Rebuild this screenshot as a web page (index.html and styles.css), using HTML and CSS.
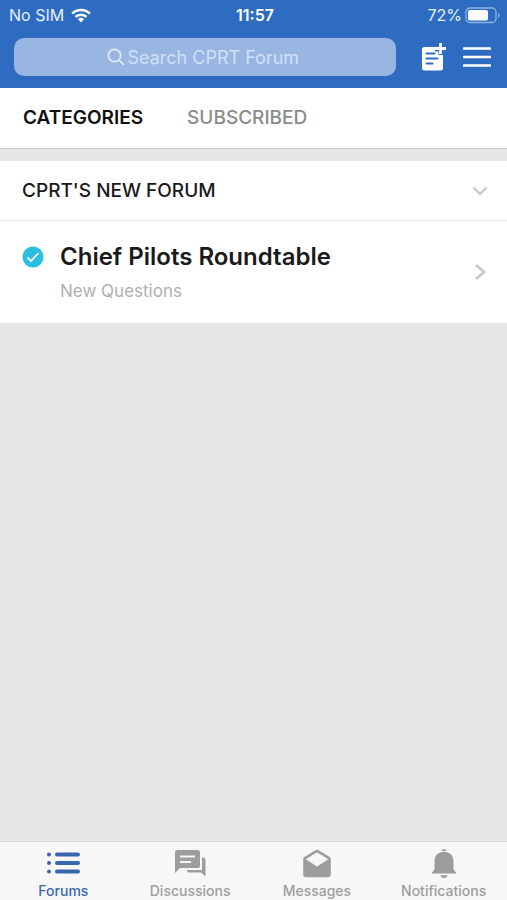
FILE: index.html
```html
<!DOCTYPE html>
<html lang="en">
<head>
<meta charset="utf-8">
<meta name="viewport" content="width=device-width, initial-scale=1">
<title>CPRT Forum</title>
<link rel="stylesheet" href="styles.css">
</head>
<body>
<header class="top">
  <div class="status">
    <div class="status-left">
      <span>No SIM</span>
      <svg width="20" height="15" viewBox="0 0 20 15" aria-hidden="true">
        <path d="M1.2 5.600a12.500 12.500 0 0 1 17.600 0" fill="none" stroke="#fff" stroke-width="2.700"/>
        <path d="M4.500 9a7.800 7.800 0 0 1 11 0" fill="none" stroke="#fff" stroke-width="2.500"/>
        <path d="M10 14.400 7 11.300a4.300 4.300 0 0 1 6 0z" fill="#fff"/>
      </svg>
    </div>
    <span class="clock">11:57</span>
    <div class="status-right">
      <span>72%</span>
      <svg width="36" height="17" viewBox="0 0 36 17" aria-hidden="true">
        <rect x="1" y="1" width="30" height="14.500" rx="4" fill="none" stroke="#8fb2e2" stroke-width="1.300"/>
        <rect x="3" y="3" width="20" height="10.500" rx="2" fill="#fff"/>
        <path d="M33 5.800v5c2-.8 2-4.200 0-5z" fill="#8fb2e2"/>
      </svg>
    </div>
  </div>
  <div class="toolbar">
    <label class="search">
      <svg width="18" height="18" viewBox="0 0 18 18" fill="none" stroke="#e2ecf9" stroke-width="1.700" aria-hidden="true">
        <circle cx="7.500" cy="7.500" r="6.200"/><path d="m12 12 5 5"/>
      </svg>
      <input type="search" placeholder="Search CPRT Forum" aria-label="Search CPRT Forum">
    </label>
    <button class="icon-button" type="button" aria-label="New topic">
      <svg width="26" height="30" viewBox="0 0 26 30" aria-hidden="true">
        <path d="M3.500 5H14v4.500h3.500V13H22v13a2.500 2.500 0 0 1-2.500 2.500h-16A2.500 2.500 0 0 1 1 26V7.500A2.500 2.500 0 0 1 3.500 5z" fill="#fff"/>
        <path d="M5.500 11.500h8M5.500 16.500h11M5.500 21.500h6" stroke="#2d6cc0" stroke-width="2" stroke-linecap="round"/>
        <path d="M19.500 1v11M14 6.500h11" stroke="#fff" stroke-width="2.800"/>
      </svg>
    </button>
    <button class="icon-button" type="button" aria-label="Menu">
      <svg width="28" height="22" viewBox="0 0 28 22" aria-hidden="true">
        <path d="M1 2.500h26M1 11h26M1 19.500h26" stroke="#fff" stroke-width="2.600" stroke-linecap="round"/>
      </svg>
    </button>
  </div>
</header>

<nav class="tabs" aria-label="Forum views">
  <a class="active" href="#categories">CATEGORIES</a>
  <a href="#subscribed">SUBSCRIBED</a>
</nav>

<main class="content" id="categories">
  <button class="section-head" type="button" aria-expanded="true">
    <span>CPRT'S NEW FORUM</span>
    <svg width="16" height="10" viewBox="0 0 16 10" fill="none" stroke="#c8c8c8" stroke-width="2.400" aria-hidden="true"><path d="m1.500 1.500 6.500 6.500 6.500-6.500"/></svg>
  </button>
  <a class="forum" href="#forum">
    <svg class="check" width="22" height="22" viewBox="0 0 22 22" aria-hidden="true">
      <circle cx="11" cy="11" r="10.500" fill="#27bee0"/>
      <path d="m5.500 11.500 3.500 3.500 7.500-8" fill="none" stroke="#fff" stroke-width="1.800"/>
    </svg>
    <span class="forum-text">
      <span class="forum-title">Chief Pilots Roundtable</span>
      <span class="forum-note">New Questions</span>
    </span>
    <svg class="chevron" width="16" height="16" viewBox="0 0 16 16" fill="none" stroke="#c8c8c8" stroke-width="2.600" aria-hidden="true"><path d="m4 1 8 7-8 7"/></svg>
  </a>
</main>

<nav class="bottom" aria-label="Main">
  <a class="active" href="#forums">
    <svg width="34" height="32" viewBox="0 0 34 32" aria-hidden="true">
      <g fill="none" stroke="#3867b0" stroke-width="4" stroke-linecap="round"><path d="M11 7.500h21M11 16h21M11 24.500h21"/></g>
      <g fill="#3867b0"><circle cx="3" cy="7.500" r="2"/><circle cx="3" cy="16" r="2"/><circle cx="3" cy="24.500" r="2"/></g>
    </svg>
    <span>Forums</span>
  </a>
  <a href="#discussions">
    <svg width="34" height="32" viewBox="0 0 34 32" aria-hidden="true">
      <path d="M4.500 3h20A2.500 2.500 0 0 1 27 5.500v13a2.500 2.500 0 0 1-2.500 2.500H7l-5 5V5.500A2.500 2.500 0 0 1 4.500 3z" fill="#9d9d9d"/>
      <path d="M7 9.500h15M7 15h11" stroke="#f7f7f7" stroke-width="2"/>
      <path d="M29 10.500h1a2.500 2.500 0 0 1 2.500 2.500v16.500L28 25.500H16a2 2 0 0 1-2-2V23h15z" fill="#9d9d9d"/>
    </svg>
    <span>Discussions</span>
  </a>
  <a href="#messages">
    <svg width="34" height="32" viewBox="0 0 34 32" aria-hidden="true">
      <path fill-rule="evenodd" d="M15.500 3.200a3 3 0 0 1 3 0l10.800 6.600c1 .6 1.500 1.500 1.500 2.500v15a3 3 0 0 1-3 3H6.200a3 3 0 0 1-3-3v-15c0-1 .5-1.900 1.500-2.500zM17 5.200 5.800 12.200 17 19.600l11.200-7.400z" fill="#9d9d9d"/>
    </svg>
    <span>Messages</span>
  </a>
  <a href="#notifications">
    <svg width="34" height="32" viewBox="0 0 34 32" aria-hidden="true">
      <path d="M14.500 4a2.600 2.600 0 0 1 5 0zM17 4.800c5.800 0 9.500 3.800 9.500 9.200v8l3 4.500h-25l3-4.500v-8c0-5.400 3.700-9.200 9.500-9.200zM13.500 28.200h7a3.600 3.600 0 0 1-7 0z" fill="#9d9d9d"/>
    </svg>
    <span>Notifications</span>
  </a>
</nav>
</body>
</html>
```
FILE: styles.css
```css
* { box-sizing: border-box; }

body {
  margin: 0;
  min-height: 100vh;
  display: flex;
  flex-direction: column;
  background: #e7e7e7;
  color: #1a1a1a;
  font-family: Inter, "Liberation Sans", sans-serif;
}

a { color: inherit; text-decoration: none; }
svg { display: block; flex: none; }
button { font: inherit; color: inherit; border: 0; padding: 0; cursor: pointer; }

.top { background: #2d6cc0; color: #e8f0fb; padding-bottom: 12px; }

.status {
  display: grid;
  grid-template-columns: 1fr auto 1fr;
  align-items: center;
  height: 30px;
  padding: 0 6px 0 9px;
  font-size: 16px;
}
.status-left, .status-right { display: flex; align-items: center; gap: 7px; }
.status-right { justify-content: flex-end; gap: 3px; }
.clock { color: #fff; font-weight: 600; }

.toolbar {
  display: flex;
  align-items: center;
  padding: 8px 16px 0 14px;
}
.search {
  flex: 1;
  display: flex;
  align-items: center;
  justify-content: center;
  gap: 3px;
  height: 38px;
  margin-right: 25px;
  border-radius: 10px;
  background: #98b6e1;
}
.search input {
  width: 176px;
  field-sizing: content;
  padding: 0;
  border: 0;
  outline: 0;
  background: none;
  color: #fff;
  font: 18px Inter, "Liberation Sans", sans-serif;
  appearance: none;
}
.search input::placeholder { color: #cfe0f7; opacity: 1; }
.icon-button { background: none; }
.icon-button + .icon-button { margin-left: 16px; }

.tabs {
  display: flex;
  align-items: center;
  gap: 44px;
  height: 61px;
  padding: 0 23px 2px;
  background: #fff;
  border-bottom: 1px solid #c9c9c9;
  color: #8b8b8b;
  font-size: 19px;
  font-weight: 500;
}
.tabs .active { color: #111; font-weight: 600; }

.content { flex: 1; padding-top: 12px; }

.section-head {
  display: flex;
  align-items: center;
  justify-content: space-between;
  width: 100%;
  height: 60px;
  padding: 0 19px 0 22px;
  background: #fff;
  border-bottom: 1px solid #e6e6e6;
  font-size: 19px;
  font-weight: 500;
}

.forum {
  display: flex;
  align-items: flex-start;
  padding: 20px 19px 20px 22px;
  background: #fff;
}
.check { margin-top: 5px; }
.forum-text { flex: 1; display: flex; flex-direction: column; gap: 6px; margin-left: 16px; }
.forum-title { font-size: 24px; line-height: 32px; font-weight: 600; }
.forum-note { font-size: 17px; line-height: 24px; color: #b0b0b0; }
.chevron { align-self: center; }

.bottom {
  display: grid;
  grid-template-columns: repeat(4, 1fr);
  background: #f7f7f7;
  border-top: 1px solid #d8d8d8;
  color: #9d9d9d;
  font-size: 14px;
  line-height: 18px;
  font-weight: 500;
}
.bottom a {
  display: flex;
  flex-direction: column;
  align-items: center;
  gap: 3px;
  padding-top: 5px;
}
.bottom .active { color: #3867b0; }
```
